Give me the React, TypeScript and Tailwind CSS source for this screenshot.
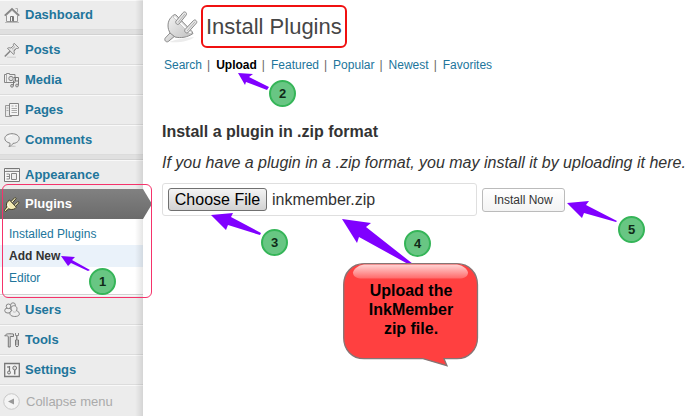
import React, { useRef } from 'react';
import clsx from 'clsx';

const Svg = ({ children }: { children: React.ReactNode }) => (
  <svg width="16" height="16" viewBox="0 0 16 16" fill="none" stroke="#858585" aria-hidden="true" className="shrink-0">
    {children}
  </svg>
);

const HomeIcon = () => (
  <Svg>
    <path d="M2.5 8v6.5h11V8L8 3z" fill="#f2f2f2" stroke="#999" />
    <path d="M.7 8.7 8 1.8l7.3 6.9" strokeWidth="1.6" />
    <path d="M2.2 8.7 8 3.3l5.8 5.4M11.5 1.5h2v3.7" stroke="#aaa" />
    <path d="M6.5 14.5v-5h3v5M8.5 10v4" stroke="#777" />
    <path d="M1 15.5h14" stroke="#bbb" />
  </Svg>
);

const PinIcon = () => (
  <Svg>
    <path d="M.8 14.5 6 9.3" strokeWidth="1.5" />
    <path d="M3.5 6.3c1.2-.8 2.4-.7 3.4-.2l2.6-2.4c-.4-1 0-2 .6-2.4l4.7 4.5c-.6.7-1.6.9-2.5.6L10 9.2c.5 1.2.4 2.3-.3 3.3z" fill="#e8e8e8" />
    <path d="m8 7.3 3-2.8M9.4 8.5l2-2" stroke="#aaa" />
    <path d="M3 15.2h9" stroke="#ccc" />
  </Svg>
);

const MediaIcon = () => (
  <Svg>
    <path d="M.5 2.5h2v-1h3v1h5.5v8H.5z" fill="#eee" />
    <path d="M2.5 3v7" stroke="#aaa" />
    <circle cx="7" cy="6.5" r="2.2" fill="#ddd" />
    <path d="M9.5 14V8.5M9.5 5.5h5v8M11.5 6v3h3" stroke="#777" />
    <circle cx="8" cy="13.8" r="1.4" fill="#ccc" />
    <circle cx="13" cy="13.5" r="1.4" fill="#ccc" />
  </Svg>
);

const PagesIcon = () => (
  <Svg>
    <path d="M1.5 3.5h6v11h-6z" fill="#e8e8e8" stroke="#999" />
    <path d="M5.5 1.5h9v12h-9z" fill="#f5f5f5" />
    <path d="M7.5 4h2M11 4h2M7.5 6.5h5.5M7.5 8.5h5.5M7.5 10.5h5.5M2.5 6h2M2.5 8.5h2" stroke="#aaa" />
  </Svg>
);

const CommentIcon = () => (
  <Svg>
    <ellipse cx="8" cy="14.3" rx="4" ry=".7" fill="#ccc" stroke="none" />
    <path d="M8 1.700c4 0 7.200 2 7.200 4.800 0 2.700-2.700 4.700-6.200 4.900-.8 1.500-2 2.600-4 3 .8-1 1.200-2 1-3.200C3 10.500.8 8.700.8 6.500c0-2.800 3.200-4.800 7.200-4.800z" fill="#eee" />
    <path d="M3 6c.8-1.800 2.700-2.500 5-2.500" stroke="#fff" />
  </Svg>
);

const AppearanceIcon = () => (
  <Svg>
    <path d="M.5 1.5h15v13H.5z" fill="#f7f7f7" stroke="#777" />
    <path d="M1 4.5h14" />
    <path d="M2 3h12" stroke="#ccc" />
    <path d="M7.5 6.5h5v6h-5z" fill="#eee" />
    <path d="M2.5 7h3M2.5 9.5h3M2.5 12h3M5.5 7v5" stroke="#888" />
  </Svg>
);

const PluginIcon = () => (
  <Svg>
    <g stroke="#3d3a25">
      <path d="m7 5.500 3.700-3.800c.6-.5 1.700.5 1.200 1.100L9 6.200M10.500 8.800l3-3c.7-.6 1.800.5 1.200 1.200l-3.300 3.500" fill="#fff9c8" />
      <path d="m5.500 4 6.800 7.200-1.400 1.500c-2 1-4.300 1.100-6.200.1L1.500 15.500.3 14.300l2.600-3.200C2 9 2.500 6.800 4 5.300z" fill="#f3ebb3" />
      <path d="M4 7.500c-.5 1.500.3 3.200 1.800 4" stroke="#fff" />
    </g>
  </Svg>
);

const UsersIcon = () => (
  <Svg>
    <g fill="#eee">
      <ellipse cx="4" cy="8.5" rx="3.3" ry="2.6" />
      <circle cx="4.5" cy="4.3" r="2.3" />
      <circle cx="9" cy="3.2" r="2.4" />
      <path d="M6 12.300c-.5-2.200.6-3.300 2-3.700C6 5.500 8 3.500 10.300 3.700c2.300.2 3.500 2.800 2 5 2.400.6 3.400 2.200 2.900 4.200-1 2-7.800 2.400-9.200-.6z" />
    </g>
    <path d="M9 9.500c1 .9 2.200.8 3 0" stroke="#bbb" />
  </Svg>
);

const ToolsIcon = () => (
  <Svg>
    <path d="M.8 4c1-2.300 3-2.600 8.700-2v2.500H6.200V15H4.300V4.500C3 3.600 2 3.600.8 4z" fill="#ddd" stroke="#777" />
    <path d="M12.500 8V4M11.500 1v2.500h3V1M13 3.500v4" stroke="#888" />
    <path d="M11.500 8h3v5.500c0 1.500-3 1.500-3 0z" fill="#ddd" stroke="#777" />
    <path d="M13 9v4" stroke="#999" />
  </Svg>
);

const SettingsIcon = () => (
  <Svg>
    <path d="M.7 1.500h14.600v13H.7z" fill="#f2f2f2" stroke="#777" strokeWidth="1.3" />
    <path d="M5.500 4v5M4 4v2" stroke="#777" strokeWidth="1.2" />
    <circle cx="5" cy="10.5" r="1.5" fill="#ddd" stroke="#777" />
    <circle cx="10.700" cy="6" r="1.900" fill="#ddd" stroke="#777" />
    <path d="M10.700 8v4.500" stroke="#777" strokeWidth="1.5" />
  </Svg>
);

const BigPlugIcon = () => (
  <svg width="34" height="36" viewBox="0 0 34 36" aria-hidden="true" className="shrink-0">
    <defs>
      <linearGradient id="plug" x1="0" y1="0" x2="1" y2="1">
        <stop offset="0" stopColor="#f4f4f4" />
        <stop offset="1" stopColor="#c0c0c0" />
      </linearGradient>
    </defs>
    <path d="M5 33c8-3 17-4 25-5-3 4-15 6-25 5z" fill="#ececec" />
    <g fill="url(#plug)" stroke="#8a8a8a" strokeLinejoin="round">
      <path d="M6.500 23.500 1.300 29c-1.500 2 .7 4.800 3 3.500l6.200-5.200z" />
      <path d="M10.500 5.500C5 9 3 14 4.500 20.500L6 24l5 4c5.500 1.300 12.500.5 18-3.500l-1-2L12 6z" />
    </g>
    {/* face of the plug, seen at an angle */}
    <path d="m11 6.500 17 17-2 1.500L9 8z" fill="#fafafa" stroke="#bbb" strokeWidth=".7" />
    <g fill="#e6e6e6" stroke="#8a8a8a" strokeLinejoin="round">
      <path d="m12 12 7.200-8.500c1.500-1.700 4.300.5 3 2.500L15 15c-1.500 1.500-4.300-1-3-3z" />
      <path d="m21 20.500 8.500-9c1.500-1.600 4.200.6 3 2.500l-8.500 9.500c-1.600 1.500-4.300-1-3-3z" />
    </g>
    <path d="m14 13.500 6.800-8.500M23 22l8-9.200" fill="none" stroke="#b4b4b4" />
  </svg>
);

type Item = { label: string; Icon: () => React.ReactElement };

const TOP_ITEMS: Item[] = [
  { label: 'Posts', Icon: PinIcon },
  { label: 'Media', Icon: MediaIcon },
  { label: 'Pages', Icon: PagesIcon },
  { label: 'Comments', Icon: CommentIcon },
];

const BOTTOM_ITEMS: Item[] = [
  { label: 'Users', Icon: UsersIcon },
  { label: 'Tools', Icon: ToolsIcon },
  { label: 'Settings', Icon: SettingsIcon },
];

const SUBMENU = ['Installed Plugins', 'Add New', 'Editor'];
const TABS = ['Search', 'Upload', 'Featured', 'Popular', 'Newest', 'Favorites'];

const BADGES = [
  { n: 1, pos: 'left-[89px] top-[268px]' },
  { n: 2, pos: 'left-[269px] top-[80px]' },
  { n: 3, pos: 'left-[261px] top-[229px]' },
  { n: 4, pos: 'left-[404px] top-[230px]' },
  { n: 5, pos: 'left-[618px] top-[216px]' },
];

const ARROWS = [
  '61,256 75,257 72,260 90,270 88,271 71,263 68,266',
  '238,73 253,74 249,77 269,87 267,90 246,82 245,85',
  '211,215 233,213 231,217 261,233 260,235 228,225 226,230',
  '342,219 371,223 366,227 413,264 408,264 359,237 357,243',
  '567,203 589,201 586,205 617,221 616,222 584,213 582,218',
];

function MenuItem({ label, Icon }: Item) {
  return (
    <li className="border-t border-t-[#f9f9f9] border-b border-b-[#dcdcdc]">
      <a href="#" className="flex h-7 items-center gap-[5px] pl-1 text-[13px] font-bold text-[#21759b]">
        <Icon />
        {label}
      </a>
    </li>
  );
}

const Separator = () => <li className="h-[5px] border-b border-[#d2d2d2] bg-[#e0e0e0]" />;

function Sidebar() {
  return (
    <nav className="relative w-[143px] shrink-0 bg-[#ececec]">
      <ul>
        <MenuItem label="Dashboard" Icon={HomeIcon} />
        <Separator />
        {TOP_ITEMS.map((item) => <MenuItem key={item.label} {...item} />)}
        <Separator />
        <MenuItem label="Appearance" Icon={AppearanceIcon} />
        <li className="-mt-px">
          <a href="#" className="relative z-10 flex h-[30px] items-center gap-[5px] bg-gradient-to-t from-[#6b6b6b] to-[#818181] pl-1 text-[13px] font-bold text-white">
            <PluginIcon />
            Plugins
            <svg width="9" height="30" aria-hidden="true" className="absolute left-full top-0">
              <defs>
                <linearGradient id="tip" x1="0" y1="0" x2="0" y2="1">
                  <stop offset="0" stopColor="#818181" />
                  <stop offset="1" stopColor="#6b6b6b" />
                </linearGradient>
              </defs>
              <path d="M0 0 9 15 0 30z" fill="url(#tip)" />
            </svg>
          </a>
          <ul className="border-b border-[#d2d2d2] bg-white pt-1 pb-[5px] text-[12px]">
            {SUBMENU.map((s) => (
              <li key={s}>
                <a
                  href="#"
                  className={clsx(
                    'flex h-[22px] items-center pl-[9px]',
                    s === 'Add New' ? 'bg-[#eaf2fa] font-bold text-[#333]' : 'text-[#21759b]'
                  )}
                >
                  {s}
                </a>
              </li>
            ))}
          </ul>
        </li>
        {BOTTOM_ITEMS.map((item) => <MenuItem key={item.label} {...item} />)}
      </ul>
      <button className="flex h-8 w-full items-center gap-[6px] border-t border-[#f9f9f9] pl-[3px] text-[13px] text-[#aaa]">
        <svg width="17" height="17" viewBox="0 0 17 17" aria-hidden="true">
          <circle cx="8.5" cy="8.5" r="7.8" fill="#f4f4f4" stroke="#c8c8c8" />
          <path d="M11 5.500v6l-6-3z" fill="#999" />
        </svg>
        Collapse menu
      </button>
      {/* inner shadow on the right edge */}
      <div className="pointer-events-none absolute inset-y-0 right-0 w-2 bg-gradient-to-r from-black/0 to-black/10" />
    </nav>
  );
}

function Annotations() {
  return (
    <div className="pointer-events-none absolute inset-0 z-20 overflow-hidden">
      <div className="absolute left-[2px] top-[184px] h-[114px] w-[150px] rounded-[6px] border border-[#f5336b]" />
      <svg className="absolute inset-0 h-full w-full" aria-hidden="true">
        {ARROWS.map((p) => <polygon key={p} points={p} fill="#8000ff" />)}
      </svg>
      {BADGES.map(({ n, pos }) => (
        <div
          key={n}
          className={clsx(
            'absolute flex size-[27px] items-center justify-center rounded-full border-2 border-[#35b558] bg-[#68c683] text-[13px] font-bold text-[#102a18]',
            pos
          )}
        >
          {n}
        </div>
      ))}
      <div className="absolute left-[343px] top-[263px] w-[136px]">
        <svg width="136" height="104" aria-hidden="true" className="absolute left-0 top-0">
          <defs>
            <linearGradient id="gloss" x1="0" y1="0" x2="0" y2="1">
              <stop offset="0" stopColor="#ffd5d5" />
              <stop offset="1" stopColor="#ff6969" />
            </linearGradient>
          </defs>
          <path
            d="M21 .7h93c12 0 20.500 9 20.500 21v53c0 12-9 21-20.500 21H101l3 7-24-7H21C9 95.700.7 86.700.7 74.700v-53C.7 9.700 9 .7 21 .7z"
            fill="#ff4040"
            stroke="#857575"
            strokeWidth="1.3"
          />
          <path d="M21 1.500h93c6 1 10 4 11 8 0 4-4 6-9 6H19c-5 0-9-2-9-6 1-4 5-7 11-8z" fill="url(#gloss)" />
        </svg>
        <p className="relative pt-[18px] text-center text-[16px] leading-[19px] font-bold text-black">
          Upload the<br />InkMember<br />zip file.
        </p>
      </div>
    </div>
  );
}

function App() {
  const fileRef = useRef<HTMLInputElement>(null);

  return (
    <div className="relative flex min-h-screen bg-white font-['Liberation_Sans',Arial,sans-serif]">
      <Sidebar />

      <main className="min-w-0 flex-1 pl-[19px]">
        <header className="flex items-center gap-[3px] pt-[5px] pl-[2px]">
          <BigPlugIcon />
          <h1 className="flex h-[43px] items-center rounded-[6px] border-2 border-[#f01010] px-[3px] text-[22px] text-[#464646]">
            Install Plugins
          </h1>
        </header>

        <ul className="mt-2 flex pl-[2px] text-[12px] leading-[18px] text-[#21759b]">
          {TABS.map((tab, i) => (
            <li key={tab}>
              {i > 0 && <span className="pr-[6px] pl-[5px] text-[#666]">|</span>}
              <a href="#" className={clsx(tab === 'Upload' && 'font-bold text-black')}>{tab}</a>
            </li>
          ))}
        </ul>

        <h4 className="mt-[49px] text-[16px] leading-[18px] font-bold text-[#333]">Install a plugin in .zip format</h4>
        <p className="mt-3 text-[16px] leading-5 text-[#333] italic">
          If you have a plugin in a .zip format, you may install it by uploading it here.
        </p>

        <form className="mt-[10px] flex items-center gap-[5px]" onSubmit={(e) => e.preventDefault()}>
          <div className="flex h-[33px] w-[315px] items-center gap-[5px] rounded-[3px] border border-[#dfdfdf] px-[5px] text-[16px] text-[#333]">
            <input ref={fileRef} type="file" aria-label="Plugin zip file" className="hidden" />
            <button
              type="button"
              onClick={() => fileRef.current?.click()}
              className="h-[23px] w-[99px] rounded-[3px] border border-[#707070] bg-gradient-to-b from-[#f4f4f4] to-[#d2d2d2] leading-5 whitespace-nowrap text-black"
            >
              Choose File
            </button>
            <span>inkmember.zip</span>
          </div>
          <button
            type="submit"
            className="h-6 rounded-[3px] border border-[#bbb] bg-gradient-to-b from-white to-[#f3f3f3] px-[11px] text-[12px] text-[#333]"
          >
            Install Now
          </button>
        </form>
      </main>

      <Annotations />
    </div>
  );
}

export default App;
